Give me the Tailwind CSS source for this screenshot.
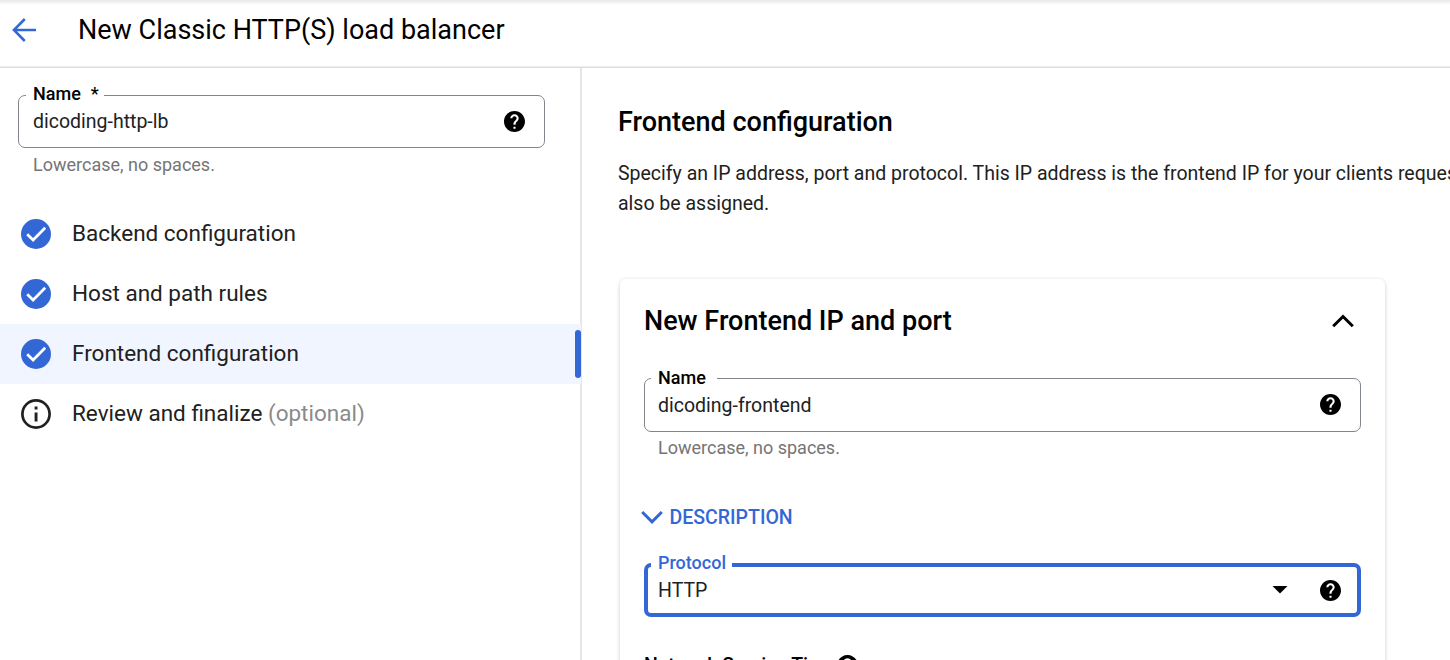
<!DOCTYPE html>
<html lang="en">
<head>
<meta charset="utf-8">
<title>New Classic HTTP(S) load balancer</title>
<script src="https://cdn.jsdelivr.net/npm/@tailwindcss/browser@4"></script>
</head>
<body class="flex h-[660px] w-[1450px] flex-col overflow-hidden bg-white font-['Roboto',sans-serif] text-black">
<svg class="hidden">
  <symbol id="help" viewBox="2 2 20 20"><path d="M12 2C6.48 2 2 6.48 2 12s4.48 10 10 10 10-4.48 10-10S17.52 2 12 2zm1 17h-2v-2h2v2zm2.07-7.75l-.9.92C13.45 12.9 13 13.5 13 15h-2v-.5c0-1.1.45-2.1 1.17-2.83l1.24-1.26c.37-.36.59-.86.59-1.41 0-1.1-.9-2-2-2s-2 .9-2 2H8c0-2.21 1.79-4 4-4s4 1.79 4 4c0 .88-.36 1.68-.93 2.25z" stroke="none"/></symbol>
  <symbol id="check" viewBox="0 0 30 30"><circle cx="15" cy="15" r="15" fill="#3367d6"/><path d="M6.2 15.2 12.1 21 24.2 8.8" fill="none" stroke="#fff" stroke-width="2.7"/></symbol>
</svg>
<header class="flex h-[68px] shrink-0 items-center border-b border-[#dedede] bg-linear-to-b from-[#e8e8e8] to-white to-[5px] pb-[7px] pl-3 shadow-[inset_0_-1px_0_#eeeeee]">
  <svg class="h-6 w-6" viewBox="0 0 24 24" fill="none" stroke="#3367d6" stroke-width="2.5"><path d="M24 12H2M12.8 1 1.9 12l10.900 11"/></svg>
  <h1 class="ml-[42px] text-[27px] leading-9">New Classic HTTP(S) load balancer</h1>
</header>
<div class="flex min-h-0 flex-1">
  <aside class="w-[582px] shrink-0 border-r-2 border-[#e6e6e6] pt-[17px]">
    <fieldset class="ml-[18px] h-[63px] w-[527px] rounded-[7px] border border-[#80868b] pl-[7px] pr-[19px]">
      <legend class="h-[21px] w-[78px] pl-[7px] text-[18px] font-medium leading-[18px]">Name<span class="ml-[10px]">*</span></legend>
      <div class="flex h-[30px] items-center justify-between pl-[7px] text-[19.500px] text-[#202124]"><span class="pt-[2px]">dicoding-http-lb</span><svg class="h-[21px] w-[21px] fill-black"><use href="#help"/></svg></div>
    </fieldset>
    <p class="ml-[33px] mt-[5px] text-[18px] leading-6 text-[#757575]">Lowercase, no spaces.</p>
    <nav class="mt-[27px] text-[22.500px] text-[#212121]">
      <div class="flex h-[60px] items-center pl-[21px]"><svg class="h-[30px] w-[30px]"><use href="#check"/></svg><span class="ml-[21px]">Backend configuration</span></div>
      <div class="flex h-[60px] items-center pl-[21px]"><svg class="h-[30px] w-[30px]"><use href="#check"/></svg><span class="ml-[21px]">Host and path rules</span></div>
      <div class="flex h-[60px] w-[581px] items-center bg-[#f0f5ff] pl-[21px]"><svg class="h-[30px] w-[30px]"><use href="#check"/></svg><span class="ml-[21px]">Frontend configuration</span><span class="ml-auto h-12 w-[6px] rounded-[3px] bg-[#3367d6]"></span></div>
      <div class="flex h-[60px] items-center pl-[21px]"><svg class="h-[30px] w-[30px]" viewBox="0 0 30 30"><circle cx="15" cy="15" r="13.600" fill="none" stroke="#212121" stroke-width="2.700"/><path d="M13.600 7.500h2.900v2.900h-2.900zM13.600 13.400h2.900v9h-2.900z" fill="#212121"/></svg><span class="ml-[21px] whitespace-pre">Review and finalize <span class="text-[#8a8a8a]">(optional)</span></span></div>
    </nav>
  </aside>
  <main class="min-w-0 flex-1 overflow-hidden pl-9 pt-9">
    <h2 class="text-[27px] font-medium leading-9">Frontend configuration</h2>
    <p class="mt-[19px] whitespace-nowrap text-[19.500px] leading-[30px] text-[#212121]">Specify an IP address, port and protocol. This IP address is the frontend IP for your clients requests.<br>also be assigned.</p>
    <section class="ml-[2px] mt-[60px] h-[500px] w-[765px] rounded-[6px] pl-6 pr-6 pt-6 shadow-[0_1px_4px_rgba(0,0,0,0.2)]">
      <div class="flex h-9 items-center justify-between"><h3 class="text-[27px] font-medium">New Frontend IP and port</h3><svg class="mr-[7.500px] h-[14px] w-[22px]" viewBox="0 0 22 14" fill="none" stroke="#000" stroke-width="3"><path d="M1.200 12.300 11 2.500l9.800 9.800"/></svg></div>
      <fieldset class="mt-[29px] h-[64px] w-[717px] rounded-[7px] border border-[#80868b] pl-[6px] pr-[19px]">
        <legend class="h-[21px] w-[66px] pl-[7px] text-[18px] font-medium leading-[20px]">Name</legend>
        <div class="flex h-[30px] items-center justify-between pl-[7px] text-[19.500px] text-[#202124]"><span class="pt-[3px]">dicoding-frontend</span><svg class="h-[21px] w-[21px] fill-black"><use href="#help"/></svg></div>
      </fieldset>
      <p class="ml-[14px] mt-[4px] text-[18px] leading-6 text-[#757575]">Lowercase, no spaces.</p>
      <div class="mt-[42px] flex h-[30px] items-center text-[#3367d6]"><svg class="-ml-[3px] h-[14px] w-[22px]" viewBox="0 0 22 14" fill="none" stroke="currentColor" stroke-width="3"><path d="M1.200 2 11 11.800 20.800 2"/></svg><span class="ml-[6.500px] pt-[2px] text-[19.500px] font-medium">DESCRIPTION</span></div>
      <fieldset class="mt-[23px] h-[62px] w-[717px] rounded-[7px] border-4 border-[#3367d6] pl-[3px] pr-[16px]">
        <legend class="h-5 w-[81px] pl-[7px] text-[18px] font-medium leading-[16px] text-[#3367d6]">Protocol</legend>
        <div class="flex h-[30px] items-center pl-[7px] text-[19.500px] text-[#202124]"><span class="pt-[2px]">HTTP</span><svg class="ml-auto mr-[32px] h-2 w-4" viewBox="0 0 16 8"><path d="M.5 0h15L8 7.500z"/></svg><svg class="h-[21px] w-[21px] fill-black"><use href="#help"/></svg></div>
      </fieldset>
      <div class="mt-[33px] flex h-[30px] items-center"><span class="pt-[2px] text-[19.500px] font-medium">Network Service Tier</span><svg class="ml-3 mt-px h-[21px] w-[21px] fill-black"><use href="#help"/></svg></div>
    </section>
  </main>
</div>
</body>
</html>
